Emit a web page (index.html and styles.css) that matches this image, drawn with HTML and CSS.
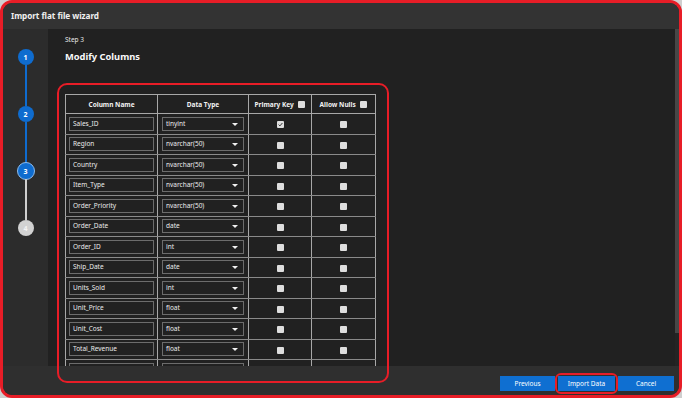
FILE: index.html
```html
<!DOCTYPE html>
<html>
<head>
<meta charset="utf-8">
<link rel="stylesheet" href="styles.css">
</head>
<body>
<div class="window">
  <div class="titlebar">Import flat file wizard</div>
  <div class="main">
    <div class="stepper">
      <div class="step done">1</div>
      <div class="line blue"></div>
      <div class="step done">2</div>
      <div class="line blue"></div>
      <div class="step current">3</div>
      <div class="line grey"></div>
      <div class="step todo">4</div>
    </div>
    <div class="content">
      <div class="step-label">Step 3</div>
      <h1 class="heading">Modify Columns</h1>
      <table class="grid">
        <colgroup><col class="c1"><col class="c2"><col class="c3"><col class="c4"></colgroup>
        <thead>
          <tr><th>Column Name</th><th>Data Type</th><th>Primary Key <span class="cb"></span></th><th>Allow Nulls <span class="cb"></span></th></tr>
        </thead>
        <tbody>
          <tr><td><div class="inp">Sales_ID</div></td><td><div class="sel">tinyint<i></i></div></td><td><span class="cb checked"><svg viewBox="0 0 7 7" width="7" height="7"><path d="M1.6 3.6 L2.9 4.9 L5.4 2" fill="none" stroke="#333" stroke-width="1"/></svg></span></td><td><span class="cb"></span></td></tr>
          <tr><td><div class="inp">Region</div></td><td><div class="sel">nvarchar(50)<i></i></div></td><td><span class="cb"></span></td><td><span class="cb"></span></td></tr>
          <tr><td><div class="inp">Country</div></td><td><div class="sel">nvarchar(50)<i></i></div></td><td><span class="cb"></span></td><td><span class="cb"></span></td></tr>
          <tr><td><div class="inp">Item_Type</div></td><td><div class="sel">nvarchar(50)<i></i></div></td><td><span class="cb"></span></td><td><span class="cb"></span></td></tr>
          <tr><td><div class="inp">Order_Priority</div></td><td><div class="sel">nvarchar(50)<i></i></div></td><td><span class="cb"></span></td><td><span class="cb"></span></td></tr>
          <tr><td><div class="inp">Order_Date</div></td><td><div class="sel">date<i></i></div></td><td><span class="cb"></span></td><td><span class="cb"></span></td></tr>
          <tr><td><div class="inp">Order_ID</div></td><td><div class="sel">int<i></i></div></td><td><span class="cb"></span></td><td><span class="cb"></span></td></tr>
          <tr><td><div class="inp">Ship_Date</div></td><td><div class="sel">date<i></i></div></td><td><span class="cb"></span></td><td><span class="cb"></span></td></tr>
          <tr><td><div class="inp">Units_Sold</div></td><td><div class="sel">int<i></i></div></td><td><span class="cb"></span></td><td><span class="cb"></span></td></tr>
          <tr><td><div class="inp">Unit_Price</div></td><td><div class="sel">float<i></i></div></td><td><span class="cb"></span></td><td><span class="cb"></span></td></tr>
          <tr><td><div class="inp">Unit_Cost</div></td><td><div class="sel">float<i></i></div></td><td><span class="cb"></span></td><td><span class="cb"></span></td></tr>
          <tr><td><div class="inp">Total_Revenue</div></td><td><div class="sel">float<i></i></div></td><td><span class="cb"></span></td><td><span class="cb"></span></td></tr>
          <tr><td><div class="inp">Total_Cost</div></td><td><div class="sel">float<i></i></div></td><td><span class="cb"></span></td><td><span class="cb"></span></td></tr>
          <tr><td><div class="inp">Total_Profit</div></td><td><div class="sel">float<i></i></div></td><td><span class="cb"></span></td><td><span class="cb"></span></td></tr>
        </tbody>
      </table>
    </div>
    <div class="scrollbar"><div class="thumb"></div></div>
  </div>
  <div class="footer">
    <button class="btn">Previous</button>
    <button class="btn">Import Data</button>
    <button class="btn">Cancel</button>
  </div>
  <div class="mark mark-table"></div>
  <div class="mark mark-btn"></div>
</div>
</body>
</html>
```

FILE: styles.css
```css
html { background: #cfcfcf; }
body {
  margin: 0;
  font-family: "Noto Sans", "Open Sans", sans-serif;
  color: #f0f0f0;
}
.window {
  position: relative;
  width: 682px;
  height: 398px;
  box-sizing: border-box;
  border: 3px solid #e81d27;
  border-radius: 12px;
  overflow: hidden;
  background: #2d2d2d;
  display: flex;
  flex-direction: column;
}
.titlebar {
  height: 26px;
  flex: none;
  background: #333333;
  font-size: 8.2px;
  font-weight: 700;
  line-height: 26px;
  padding-left: 8px;
  letter-spacing: -0.05px;
}
.main {
  flex: 1;
  display: flex;
  min-height: 0;
}
.stepper {
  width: 45px;
  flex: none;
  background: #2c2c2c;
  display: flex;
  flex-direction: column;
  align-items: center;
  padding-top: 20px;
  box-sizing: border-box;
}
.step {
  width: 16px;
  height: 16px;
  border-radius: 50%;
  flex: none;
  font-size: 7px;
  font-weight: 700;
  display: flex;
  align-items: center;
  justify-content: center;
  box-sizing: border-box;
}
.step.done { background: #0f6ccf; color: #fff; }
.step.current {
  width: 18px; height: 18px;
  background: #0f6ccf;
  border: 1.5px solid #8dbcec;
  color: #fff;
  margin: -1px 0;
}
.step.todo { background: #d2d2d2; color: #f4f4f4; }
.line { width: 2px; height: 41px; flex: none; }
.line.blue { background: #0f6ccf; }
.line.grey { background: #cfcfcf; }
.content {
  flex: 1;
  background: #212121;
  padding: 6px 0 0 17px;
  overflow: hidden;
  min-width: 0;
}
.step-label {
  font-size: 6.5px;
  line-height: 9px;
  color: #e8e8e8;
}
.heading {
  margin: 6px 0 0;
  font-size: 9.3px;
  line-height: 14px;
  font-weight: 700;
  color: #fafafa;
}
.grid {
  margin-top: 30px;
  border-collapse: collapse;
  width: 310px;
  table-layout: fixed;
  border: 1px solid #a8a8a8;
}
.c1 { width: 92px; }
.c2 { width: 91px; }
.c3 { width: 63px; }
.c4 { width: 64px; }
.grid th {
  height: 18px;
  padding: 0;
  font-size: 6.5px;
  font-weight: 700;
  border: 1px solid #a8a8a8;
  text-align: center;
  color: #f2f2f2;
}
.grid td {
  height: 19.5px;
  padding: 0 3px;
  border: 1px solid #8a8a8a;
  border-left-color: #a8a8a8;
  border-right-color: #a8a8a8;
  text-align: center;
  font-size: 6.5px;
}
.grid th .cb { margin-left: 3px; vertical-align: -1px; }
.inp, .sel {
  height: 14px;
  box-sizing: border-box;
  border: 1px solid #6c6c6c;
  background: #212121;
  text-align: left;
  padding-left: 3px;
  line-height: 12px;
  color: #ececec;
}
.sel { position: relative; margin-left: 1px; margin-right: 1px; }
.sel i {
  position: absolute;
  right: 5px;
  top: 5px;
  width: 0; height: 0;
  border-left: 3px solid transparent;
  border-right: 3px solid transparent;
  border-top: 3px solid #f0f0f0;
}
.cb {
  display: inline-block;
  width: 7px;
  height: 7px;
  background: #dedede;
  border-radius: 1px;
  vertical-align: middle;
}
.cb svg { display: block; }
.scrollbar {
  width: 4px;
  flex: none;
  background: #242424;
}
.thumb {
  height: 304px;
  background: #474747;
}
.footer {
  height: 29px;
  flex: none;
  background: #2f2f2f;
  display: flex;
  justify-content: flex-end;
  align-items: flex-start;
  gap: 3px;
  padding: 10px 5px 0 0;
  box-sizing: border-box;
}
.btn {
  height: 15px;
  border: none;
  background: #0f6fd1;
  color: #fff;
  font-family: inherit;
  font-size: 6.5px;
  padding: 0;
  width: 56px;
}
.btn:nth-child(1) { width: 55px; }
.btn:nth-child(2) { width: 57px; }
.mark {
  position: absolute;
  border: 2px solid #e81d27;
  box-sizing: border-box;
}
.mark-table {
  left: 54px;
  top: 80px;
  width: 332px;
  height: 300px;
  border-radius: 10px;
}
.mark-btn {
  left: 552px;
  top: 370px;
  width: 63px;
  height: 21px;
  border-radius: 6px;
}
```
